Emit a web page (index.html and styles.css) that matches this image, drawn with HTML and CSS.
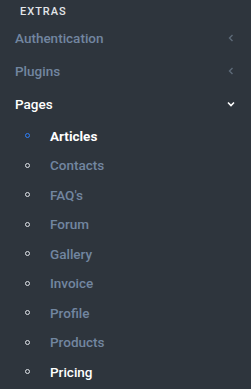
FILE: index.html
```html
<!DOCTYPE html>
<html lang="en">
  <head>
    <meta charset="UTF-8" />
    <title>Sidebar</title>
    <link rel="stylesheet" href="styles.css">
  </head>
  <body>
    <div class="side-nav">
      <div class="side-title">Extras</div>
      <a href="#" class="side-link">
        <span>Authentication</span>
        <svg class="arrow" width="8" height="8" viewBox="0 0 8 8"><path d="M5.5 1 L2.5 4 L5.5 7" fill="none" stroke="currentColor" stroke-width="1.4"/></svg>
      </a>
      <a href="#" class="side-link">
        <span>Plugins</span>
        <svg class="arrow" width="8" height="8" viewBox="0 0 8 8"><path d="M5.5 1 L2.5 4 L5.5 7" fill="none" stroke="currentColor" stroke-width="1.4"/></svg>
      </a>
      <a href="#" class="side-link open">
        <span>Pages</span>
        <svg class="arrow" width="8" height="8" viewBox="0 0 8 8"><path d="M1 2.5 L4 5.5 L7 2.5" fill="none" stroke="currentColor" stroke-width="1.6"/></svg>
      </a>
      <ul class="sub-menu">
        <li class="active"><a href="#">Articles</a></li>
        <li><a href="#">Contacts</a></li>
        <li><a href="#">FAQ's</a></li>
        <li><a href="#">Forum</a></li>
        <li><a href="#">Gallery</a></li>
        <li><a href="#">Invoice</a></li>
        <li><a href="#">Profile</a></li>
        <li><a href="#">Products</a></li>
        <li class="current"><a href="#">Pricing</a></li>
      </ul>
    </div>
  </body>
</html>
```

FILE: styles.css
```css
body {
  margin: 0;
  padding: 0;
  background-color: #2e353d;
  font-family: "Roboto", "Noto Sans", sans-serif;
}
.side-nav {
  width: 251px;
  height: 389px;
  overflow: hidden;
}
.side-title {
  padding: 5px 20px 0;
  font-size: 11px;
  font-weight: 500;
  letter-spacing: 1px;
  text-transform: uppercase;
  color: #e3e6ea;
  line-height: 14px;
}
.side-link {
  display: flex;
  align-items: center;
  justify-content: space-between;
  height: 33px;
  padding: 0 16px 0 15px;
  font-size: 13.5px;
  font-weight: 500;
  color: #7286a0;
  text-decoration: none;
}
.side-link:first-of-type {
  margin-top: 2px;
}
.side-link .arrow {
  color: #5d6a78;
}
.side-link.open {
  color: #ffffff;
}
.side-link.open .arrow {
  color: #ffffff;
}
.sub-menu {
  list-style: none;
  margin: 1px 0 0;
  padding: 0;
}
.sub-menu li {
  display: flex;
  align-items: center;
  height: 29.5px;
  padding-left: 25px;
}
.sub-menu li::before {
  content: "";
  width: 3px;
  height: 3px;
  border: 1.2px solid #dfe3e8;
  border-radius: 50%;
  margin-right: 20px;
}
.sub-menu li a {
  font-size: 13.5px;
  font-weight: 500;
  color: #7286a0;
  text-decoration: none;
}
.sub-menu li.active::before {
  border-color: #2d7ff9;
}
.sub-menu li.active a,
.sub-menu li.current a {
  color: #ffffff;
}
.sub-menu li.active a {
  font-weight: 700;
}
```
